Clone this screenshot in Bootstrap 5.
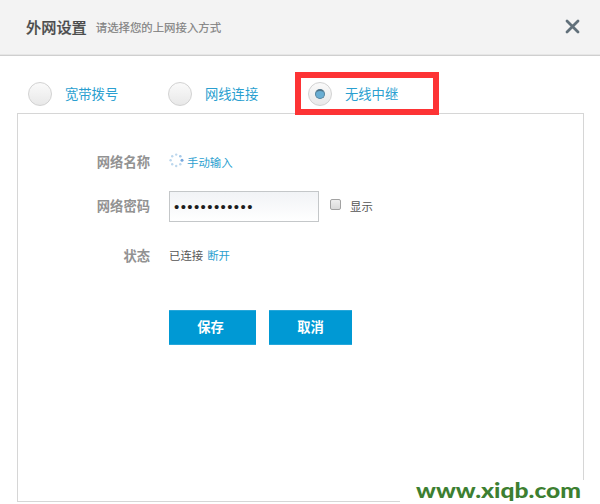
<!DOCTYPE html>
<html lang="zh-CN">
<head>
<meta charset="utf-8">
<meta name="viewport" content="width=device-width, initial-scale=1">
<title>外网设置</title>
<link href="https://cdn.jsdelivr.net/npm/bootstrap@5.3.0/dist/css/bootstrap.min.css" rel="stylesheet">
<style>
body{width:600px;height:504px;overflow:hidden;background:#fff;font-family:"Noto Sans CJK SC",sans-serif;font-size:11.4px;line-height:1.5;color:#555}
.dialog-head{height:56px;background:#f3f3f3;border-bottom:1px solid #cfcfcf;padding:0 20px 3px 26px;box-shadow:inset 0 -1px #e6e6e6}
.dialog-title{font-size:15.2px;font-weight:500;color:#4b4b4b;-webkit-text-stroke:.2px #4b4b4b;line-height:20px}
.dialog-sub{font-size:11.4px;color:#808080;-webkit-text-stroke:.15px #808080;margin-left:9px;line-height:20px;padding-top:2px}
.close-btn{width:15px;height:15px;line-height:0}
.modes{height:57px;padding:16px 0 0 17px}
.mode{width:140px;height:43px;padding-left:10.5px;font-size:13.3px;color:#2b9fd0;gap:13.5px;cursor:pointer}
.mode.active{width:144px;margin-left:-2px;padding-left:6.5px;border:6px solid #fd3335}
.dial{width:24px;height:24px;flex:none;border:1px solid #d2d2d2;border-radius:50%;background:linear-gradient(#fafafa,#e8e8e8)}
.dial i{width:10px;height:10px;border-radius:50%;background:#69aed3;border:1px solid #55849e;border-top:2px solid #50758a}
.pane{width:567px;height:389px;margin-left:17px;border:1px solid #d6d6d6;padding-top:31px}
.field-row{height:34px}
.field-name{width:132px;margin-right:19px;text-align:right;font-size:13.3px;font-weight:700;color:#929292;flex:none}
.manual{margin:2px 0 0 3px}
.state-row{margin-top:17.5px}
.lnk{color:#2b9fd0;text-decoration:none}
.secret.form-control{width:150px;height:31px;flex:none;border:1px solid #c4c7c9;border-radius:0;background:linear-gradient(#f1f3f6,#fff);padding:0 4px;color:#1d1d1d;font-family:"Liberation Sans",sans-serif;font-size:15px;letter-spacing:1.4px}
.tick.form-check-input{width:11px;height:11px;border:1px solid #a2a2a2;border-radius:2px;background:linear-gradient(#eee,#dadada);margin:-3px 9px 0 11px;flex:none}
.reveal-label{padding-top:2px}
.actions{margin-top:29px}
.act.btn{height:35px;padding:0 4px 0 0;border:1px solid #27a7da;border-left:0;border-right:0;border-radius:0;background:#0099d4;color:#fff;font-size:13.3px;font-weight:700;line-height:32px}
.save{width:87px;margin-right:13px}.act.cancel{width:83px;padding:0}
.site-mark{position:absolute;left:400px;top:480px;width:200px;height:24px;background:#fff;font:900 20px/20px Lato,sans-serif}
.site-mark text{fill:#3d7f31}
</style>
</head>
<body>
<header class="dialog-head d-flex align-items-center">
  <span class="dialog-title">外网设置</span><span class="dialog-sub">请选择您的上网接入方式</span>
  <a class="close-btn ms-auto" role="button" aria-label="关闭"><svg width="15" height="15" viewBox="0 0 15 15"><path d="M2 2 13 13M13 2 2 13" stroke="#61707a" stroke-width="2.8" stroke-linecap="round"/></svg></a>
</header>
<nav class="modes d-flex">
  <div class="mode d-flex align-items-center"><span class="dial"></span>宽带拨号</div>
  <div class="mode d-flex align-items-center"><span class="dial"></span>网线连接</div>
  <div class="mode active d-flex align-items-center"><span class="dial d-flex align-items-center justify-content-center"><i></i></span>无线中继</div>
</nav>
<main class="pane">
  <div class="field-row d-flex align-items-center">
    <span class="field-name">网络名称</span>
    <svg class="mb-1" width="15" height="15" viewBox="0 0 15 15"><g fill="#bcd7ed"><circle cx="7.2" cy="1.6" r="1.2"/><circle cx="3.2" cy="3.2" r="1.2"/><circle cx="1.6" cy="7.3" r="1.2"/><circle cx="3.2" cy="11.3" r="1.2"/><circle cx="7.2" cy="13" r="1.2"/><circle cx="11.3" cy="11.3" r="1.2"/><circle cx="11.3" cy="3.2" r="1.3" fill="#a4c8e8"/><circle cx="13" cy="7.3" r="1.5" fill="#78a9df"/></g></svg>
    <a class="lnk manual" href="#">手动输入</a>
  </div>
  <div class="field-row d-flex align-items-center mt-2 pt-1">
    <span class="field-name">网络密码</span>
    <input class="secret form-control" type="password" value="abcdefghijkl" aria-label="网络密码">
    <input class="tick form-check-input" type="checkbox" id="reveal"><label class="reveal-label" for="reveal">显示</label>
  </div>
  <div class="field-row state-row d-flex align-items-center">
    <span class="field-name">状态</span>
    <span>已连接</span><a class="lnk ms-1" href="#">断开</a>
  </div>
  <div class="actions d-flex pt-2">
    <span class="field-name"></span>
    <button class="act save btn">保存</button>
    <button class="act cancel btn">取消</button>
  </div>
</main>
<div class="site-mark"><svg class="d-block overflow-visible" width="200" height="24"><text x="16" y="18" textLength="165" lengthAdjust="spacingAndGlyphs">www.xiqb.com</text></svg></div>
<script src="https://cdn.jsdelivr.net/npm/bootstrap@5.3.0/dist/js/bootstrap.bundle.min.js"></script>
</body>
</html>
